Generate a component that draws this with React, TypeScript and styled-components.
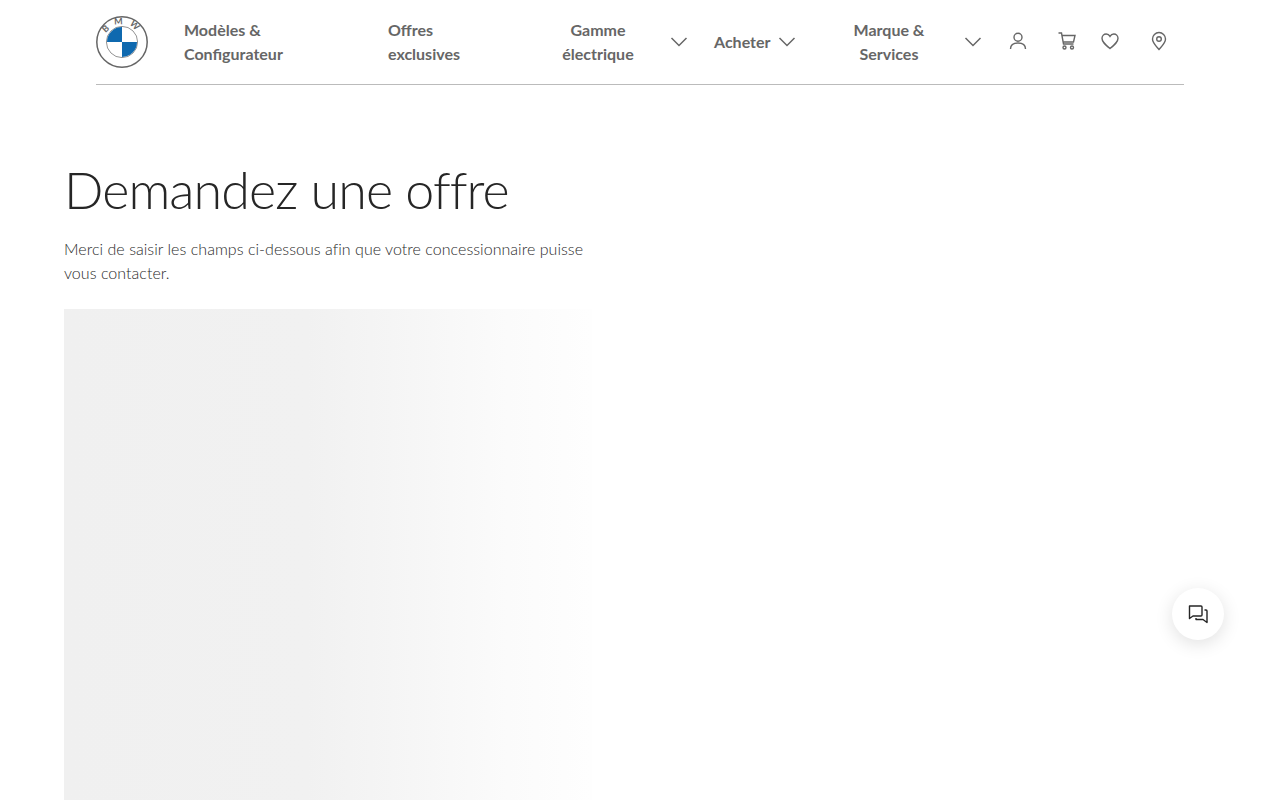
import React from "react";
import styled, { createGlobalStyle } from "styled-components";

const Global = createGlobalStyle`
  html, body { margin: 0; padding: 0; background: #fff; height: 100%; overflow: hidden; }
  body { font-family: "Lato", "Noto Sans", sans-serif; }
`;

const Page = styled.div`
  width: 1280px;
  height: 800px;
  overflow: hidden;
  position: relative;
`;

const Header = styled.header`
  margin: 0 96px;
  height: 84px;
  border-bottom: 1px solid #bbbbbb;
  display: flex;
  align-items: center;
`;

const LogoBox = styled.a`
  width: 52px;
  height: 52px;
  margin-right: 36px;
  flex: none;
`;

const NavItem = styled.a<{ $w: number; $center?: boolean; $ml?: number }>`
  width: ${(p) => p.$w}px;
  margin-left: ${(p) => p.$ml ?? 0}px;
  flex: none;
  display: block;
  text-align: ${(p) => (p.$center ? "center" : "left")};
  font-size: 16px;
  line-height: 24px;
  font-weight: 700;
  color: #666666;
`;

const Chevron = styled.svg<{ $gap: number }>`
  width: 18px;
  height: 10px;
  margin-left: ${(p) => p.$gap}px;
  flex: none;
`;

const Icons = styled.div`
  display: flex;
  align-items: center;
  margin-left: 24px;
  margin-top: -2px;
`;

const IconBox = styled.span<{ $w: number; $ml?: number }>`
  width: ${(p) => p.$w}px;
  margin-left: ${(p) => p.$ml ?? 0}px;
  height: 24px;
  display: flex;
  align-items: center;
  justify-content: center;
  flex: none;
  color: #666;
`;

const Main = styled.main`
  padding: 70px 0 0 64px;
`;

const Title = styled.h1`
  margin: 0;
  font-size: 52px;
  line-height: 68px;
  font-weight: 300;
  letter-spacing: -0.92px;
  font-variant-ligatures: none;
  color: #262626;
`;

const Lead = styled.p`
  margin: 14px 0 0;
  width: 530px;
  font-size: 16px;
  line-height: 24px;
  font-weight: 300;
  letter-spacing: 0.04px;
  color: #2b2b2b;
`;

const Skeleton = styled.div`
  margin-top: 24px;
  width: 528px;
  height: 600px;
  background: linear-gradient(90deg, #f0f0f0 0%, #f1f1f1 46%, #f6f6f6 66%, #fbfbfb 84%, #fefefe 100%);
`;

const ChatButton = styled.button`
  position: absolute;
  left: 1172px;
  top: 588px;
  width: 52px;
  height: 52px;
  border: 0;
  border-radius: 50%;
  background: #fff;
  box-shadow: 0 4px 18px rgba(0, 0, 0, 0.12);
  display: flex;
  align-items: center;
  justify-content: center;
  padding: 0;
`;

const Logo = () => (
  <svg width="52" height="52" viewBox="0 0 52 52" style={{ display: "block" }}>
    <circle cx="26" cy="26" r="25.2" fill="#fff" stroke="#666" strokeWidth="1.5" />
    <circle cx="26" cy="26" r="15.6" fill="#fff" stroke="#666" strokeWidth="0.7" />
    <path d="M26 26V11a15 15 0 0 0-15 15z" fill="#0f69af" />
    <path d="M26 26v15a15 15 0 0 0 15-15z" fill="#0f69af" />
    <defs>
      <path id="logoArc" d="M8.200 26a17.800 17.800 0 0 1 35.600 0" />
    </defs>
    <text fontSize="9" fontWeight="700" fill="#666" fontFamily="Lato, sans-serif">
      <textPath href="#logoArc" startOffset="52%" textAnchor="middle" letterSpacing="5.500">BMW</textPath>
    </text>
  </svg>
);

const Down = ({ gap }: { gap: number }) => (
  <Chevron $gap={gap} viewBox="0 0 18 10" fill="none" stroke="#666" strokeWidth="1.5">
    <path d="M1.500 1l7.500 7.500L16.500 1" />
  </Chevron>
);

const stroke = { fill: "none", stroke: "currentColor", strokeWidth: 1.4 } as const;

export default function App() {
  return (
    <Page>
      <Global />
      <Header>
        <LogoBox><Logo /></LogoBox>
        <NavItem $w={204}>Modèles &amp;<br />Configurateur</NavItem>
        <NavItem $w={174}>Offres<br />exclusives</NavItem>
        <NavItem $w={72} $center>Gamme<br />électrique</NavItem>
        <Down gap={36} />
        <NavItem $w={64} $ml={26}>Acheter</NavItem>
        <Down gap={0} />
        <NavItem $w={72} $center $ml={57}>Marque &amp;<br />Services</NavItem>
        <Down gap={39} />
        <Icons>
          <IconBox $w={24}>
            <svg width="20" height="20" viewBox="0 0 20 20" {...stroke}>
              <circle cx="10" cy="6.200" r="4" />
              <path d="M2.500 18c0-4 3-6 7.500-6s7.500 2 7.500 6" />
            </svg>
          </IconBox>
          <IconBox $w={24} $ml={25}>
            <svg width="20" height="20" viewBox="0 0 20 20" {...stroke}>
              <path d="M1.500 2h3l2 11h10" />
              <path d="M5 4.500h13l-1.500 6.500H6.200" />
              <circle cx="7.500" cy="16.500" r="1.500" />
              <circle cx="15" cy="16.500" r="1.500" />
            </svg>
          </IconBox>
          <IconBox $w={24} $ml={19}>
            <svg width="20" height="20" viewBox="0 0 20 20" {...stroke}>
              <path d="M10 17.500C5 13.500 2 11 2 7.300 2 4.800 4 3 6.200 3 7.800 3 9.200 3.900 10 5.300 10.800 3.900 12.200 3 13.800 3 16 3 18 4.800 18 7.300c0 3.700-3 6.200-8 10.200z" />
            </svg>
          </IconBox>
          <IconBox $w={24} $ml={25}>
            <svg width="20" height="20" viewBox="0 0 20 20" {...stroke}>
              <path d="M10 18.500c-2.500-3-6.500-6.500-6.500-10.500a6.500 6.500 0 0 1 13 0c0 4-4 7.500-6.500 10.500z" />
              <circle cx="10" cy="8" r="2.300" />
            </svg>
          </IconBox>
        </Icons>
      </Header>
      <Main>
        <Title>Demandez une offre</Title>
        <Lead>Merci de saisir les champs ci-dessous afin que votre concessionnaire puisse vous contacter.</Lead>
        <Skeleton />
      </Main>
      <ChatButton aria-label="Chat">
        <svg width="22" height="22" viewBox="0 0 22 22" fill="none" stroke="#262626" strokeWidth="1.4" strokeLinejoin="round">
          <path d="M2.500 3h11.500a1 1 0 0 1 1 1v8a1 1 0 0 1-1 1H6l-3.500 2.500z" />
          <path d="M17.500 7h1.500a1 1 0 0 1 1 1v11.500l-4-3H9v-1.500" />
        </svg>
      </ChatButton>
    </Page>
  );
}
